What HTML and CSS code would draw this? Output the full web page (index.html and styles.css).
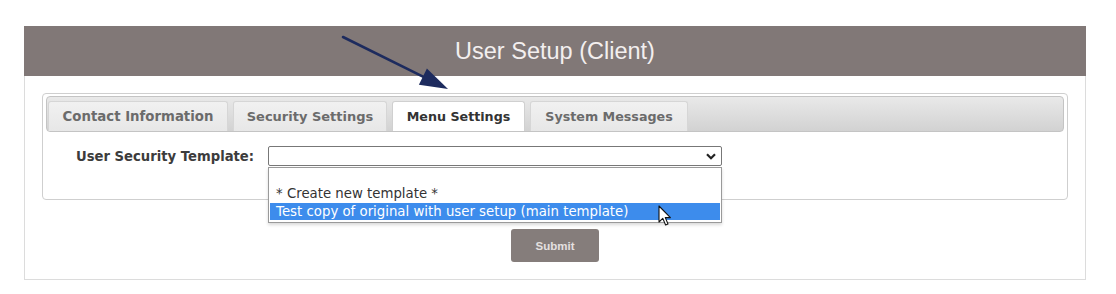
FILE: index.html
```html
<!DOCTYPE html>
<html lang="en">
<head>
<meta charset="utf-8">
<title>User Setup (Client)</title>
<link rel="stylesheet" href="styles.css">
</head>
<body>
<div class="page">
  <section class="panel">
    <header class="panel-head">User Setup (Client)</header>
    <div class="panel-body">
      <div class="tabs-box">
        <ul class="tab-bar">
          <li class="tab tab-contact">Contact Information</li>
          <li class="tab tab-security">Security Settings</li>
          <li class="tab tab-menu active">Menu Settings</li>
          <li class="tab tab-system">System Messages</li>
        </ul>
        <div class="form-row">
          <label class="field-label">User Security Template:</label>
          <div class="select-wrap">
            <div class="select">
              <svg class="chevron" width="10" height="7" viewBox="0 0 10 7"><path d="M1 1.2 L5 5.2 L9 1.2" fill="none" stroke="#222" stroke-width="2.2"/></svg>
            </div>
            <ul class="dropdown">
              <li class="opt">&nbsp;</li>
              <li class="opt">* Create new template *</li>
              <li class="opt selected">Test copy of original with user setup (main template)</li>
            </ul>
            <svg class="cursor" width="14" height="22" viewBox="0 0 14 22"><path d="M1 1 L1 17 L4.8 13.4 L7.6 20 L10 19 L7.3 12.6 L12.4 12.6 Z" fill="#fff" stroke="#111" stroke-width="1.1" stroke-linejoin="round"/></svg>
          </div>
        </div>
      </div>
      <div class="actions">
        <button class="btn" type="button">Submit</button>
      </div>
    </div>
  </section>
  <svg class="annot-arrow" width="1116" height="120" viewBox="0 0 1116 120">
    <line x1="343" y1="37" x2="425" y2="77.6" stroke="#1d2b5e" stroke-width="2.6" stroke-linecap="round"/>
    <polygon points="448,89 418.9,84.7 426.9,68.5" fill="#1d2b5e"/>
  </svg>
</div>
</body>
</html>
```
FILE: styles.css
```css
html, body {
  margin: 0;
  padding: 0;
  background: #ffffff;
}

.page {
  position: relative;
  width: 1116px;
  height: 294px;
  padding: 26px 0 0 24px;
  box-sizing: border-box;
}

.panel {
  width: 1062px;
  height: 254px;
  box-sizing: border-box;
  border: 1px solid #dcdcdc;
  border-top: none;
  display: flex;
  flex-direction: column;
}

.panel-head {
  height: 50px;
  margin: 0 -1px;
  background: #817877;
  color: #f3efef;
  font-family: "Liberation Sans", Arial, sans-serif;
  font-size: 23.5px;
  display: flex;
  align-items: center;
  justify-content: center;
  padding-top: 1px;
  box-sizing: border-box;
}

.panel-body {
  padding: 17px 17px 0 17px;
  display: flex;
  flex-direction: column;
}

.tabs-box {
  border: 1px solid #cfcfcf;
  border-radius: 4px;
  padding: 2px 3px 0 3px;
  height: 107px;
  box-sizing: border-box;
}

.tab-bar {
  list-style: none;
  margin: 0;
  height: 36px;
  box-sizing: border-box;
  padding: 4px 2px 0 1px;
  border: 1px solid #c4c4c4;
  border-radius: 4px;
  background: linear-gradient(#e9e9e9, #d2d2d2);
  display: flex;
  align-items: flex-end;
  gap: 5px;
}

.tab {
  height: 30px;
  box-sizing: border-box;
  border: 1px solid #d6d6d6;
  border-bottom: none;
  border-radius: 3px 3px 0 0;
  background: linear-gradient(#f1f1f1, #e7e7e7);
  color: #6b6b6b;
  font-family: "DejaVu Sans", Verdana, sans-serif;
  font-weight: bold;
  font-size: 13px;
  display: flex;
  align-items: center;
  justify-content: center;
  white-space: nowrap;
}

.tab-contact { width: 180px; font-size: 13.3px; }
.tab-security { width: 154px; }
.tab-menu { width: 133px; font-size: 12.7px; }
.tab-system { width: 158px; font-size: 12.7px; }

.tab.active {
  background: #ffffff;
  color: #333333;
  border-color: #d0d0d0;
}

.form-row {
  display: flex;
  align-items: center;
  gap: 14px;
  margin-top: 14px;
  padding-left: 30px;
}

.field-label {
  font-family: "DejaVu Sans", Verdana, sans-serif;
  font-weight: bold;
  font-size: 13.2px;
  color: #3c3c3c;
}

.select-wrap {
  position: relative;
}

.select {
  width: 454px;
  height: 20px;
  box-sizing: border-box;
  border: 1px solid #777777;
  border-radius: 2px;
  background: #ffffff;
  display: flex;
  align-items: center;
  justify-content: flex-end;
  padding-right: 5px;
}

.dropdown {
  position: absolute;
  left: 0;
  top: 21px;
  width: 454px;
  margin: 0;
  padding: 1px 1px 2px 1px;
  list-style: none;
  box-sizing: border-box;
  border: 1px solid #9a9a9a;
  background: #ffffff;
  box-shadow: 0 2px 3px rgba(0, 0, 0, 0.15);
  z-index: 2;
}

.opt {
  height: 17px;
  line-height: 17px;
  padding-left: 6px;
  font-family: "DejaVu Sans", Verdana, sans-serif;
  font-size: 13.3px;
  color: #333333;
  white-space: nowrap;
}

.opt:nth-child(2) {
  line-height: 15px;
}

.opt.selected {
  background: #3d8cec;
  color: #ffffff;
}

.cursor {
  position: absolute;
  left: 390px;
  top: 59px;
  z-index: 3;
}

.actions {
  display: flex;
  justify-content: center;
  margin-top: 29px;
}

.btn {
  width: 88px;
  height: 33px;
  border: none;
  border-radius: 3px;
  background: #857d7b;
  color: #e4e0e0;
  font-family: "Liberation Sans", Arial, sans-serif;
  font-weight: bold;
  font-size: 11.5px;
  padding: 0;
}

.annot-arrow {
  position: absolute;
  left: 0;
  top: 0;
  pointer-events: none;
  z-index: 5;
}
```
